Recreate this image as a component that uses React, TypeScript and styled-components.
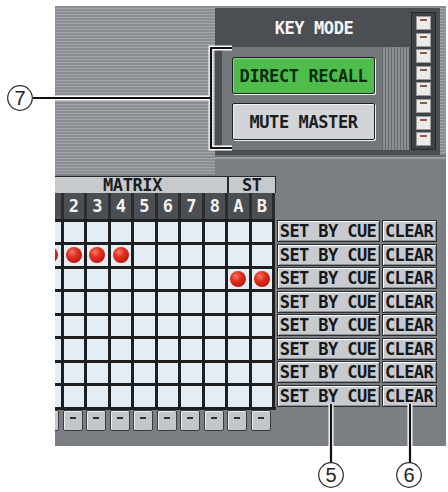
import styled, { createGlobalStyle, css } from "styled-components"

const GlobalStyle = createGlobalStyle`
  html, body {
    margin: 0;
    padding: 0;
    background: #ffffff;
  }
`

const pixelFont = css`
  font-family: "DejaVu Sans Mono", "Liberation Mono", monospace;
  font-weight: bold;
  font-size: 17px;
  letter-spacing: -0.4px;
  white-space: nowrap;
`

const Stage = styled.div`
  position: relative;
  width: 448px;
  height: 492px;
  overflow: hidden;
  padding: 6px 0 0 55px;
  box-sizing: border-box;
`

const Panel = styled.div`
  width: 391px;
  height: 440px;
  background: #7b7f84;
  display: flex;
  flex-direction: column;
`

const TopArea = styled.div`
  height: 168px;
  display: flex;
  background: repeating-linear-gradient(to bottom, #8a8e93 0 1.5px, #a1a5a9 1.5px 3px);
`

const StripeSpace = styled.div`
  width: 160px;
`

const KeyColumn = styled.div`
  display: flex;
  flex-direction: column;
  padding-top: 2px;
  flex: 1;
`

const KeyBox = styled.div`
  width: 225px;
  height: 147px;
  display: flex;
  background: #4b4f53;
`

const KeyFiller = styled.div`
  flex: 1;
  background: #7b7f84;
  border-top: 2px solid #6c7075;
  box-shadow: inset 0 2px 0 #9ca0a4;
`

const KeyMain = styled.div`
  width: 194px;
  display: flex;
  flex-direction: column;
`

const KeyTitle = styled.div`
  ${pixelFont};
  height: 39px;
  display: flex;
  align-items: center;
  justify-content: center;
  color: #f4f4f4;
  padding-left: 4px;
`

const KeyBody = styled.div`
  flex: 1;
  margin: 0 0 5px 7px;
  background: #74787c;
  display: flex;
  padding: 10px 0 10px 10px;
  gap: 7px;
`

const ModeButtons = styled.div`
  width: 143px;
  display: flex;
  flex-direction: column;
  gap: 9px;
`

const ModeButton = styled.div<{ $on?: boolean }>`
  ${pixelFont};
  height: 37px;
  box-sizing: border-box;
  display: flex;
  align-items: center;
  justify-content: center;
  border: 1px solid #1f2224;
  border-radius: 2px;
  background: ${({ $on }) => ($on ? "#4fbd4b" : "#d2d4d8")};
  color: ${({ $on }) => ($on ? "#0e2a10" : "#1b1d20")};
  box-shadow: 1px 1px 0 #eef0f2, inset 1px 1px 0 ${({ $on }) => ($on ? "#7ad676" : "#f2f3f5")};
`

const VStripes = styled.div`
  width: 27px;
  margin: -10px 0;
  background: repeating-linear-gradient(to right, #65696d 0 1px, #8a8e92 1px 3px);
`

const KeyStrip = styled.div`
  width: 31px;
  padding: 4px 4px 5px 2px;
  box-sizing: border-box;
  display: flex;
`

const StripFrame = styled.div`
  flex: 1;
  background: #3e4246;
  border: 1px solid #25282b;
  display: flex;
  flex-direction: column;
  align-items: center;
  padding-top: 3px;
  gap: 2.6px;
`

const StripKey = styled.div`
  width: 15px;
  height: 14px;
  box-sizing: border-box;
  background: #ecebea;
  border: 1px solid #9a9a9a;
  display: flex;
  justify-content: center;
  padding-top: 2px;

  &::before {
    content: "";
    width: 7px;
    height: 2px;
    background: #8a5a44;
  }
`

const MatrixArea = styled.div`
  flex: 1;
  padding-top: 2px;
  overflow: hidden;
`

const GridShift = styled.div`
  margin-left: -18px;
`

const BandRow = styled.div`
  display: flex;
  height: 17px;
`

const Band = styled.div<{ $w: number }>`
  ${pixelFont};
  width: ${({ $w }) => $w}px;
  box-sizing: border-box;
  background: #c6cacd;
  border: 1.5px solid #26292c;
  border-bottom: none;
  color: #1c1e21;
  display: flex;
  align-items: center;
  justify-content: center;
  line-height: 1;
`

const NumberRow = styled.div`
  display: flex;
  height: 25.5px;
`

const NumberCell = styled.div<{ $last?: boolean }>`
  ${pixelFont};
  width: ${({ $last }) => ($last ? 26.5 : 23.5)}px;
  box-sizing: border-box;
  background: #4b4f53;
  border-left: 3px solid #2a2d30;
  border-right: ${({ $last }) => ($last ? "3px solid #2a2d30" : "none")};
  color: #f2f2f2;
  display: flex;
  align-items: center;
  justify-content: center;
`

const DataRow = styled.div`
  display: flex;
  height: 23.5px;
`

const Cell = styled.div<{ $last?: boolean }>`
  flex-shrink: 0;
  width: ${({ $last }) => ($last ? 26.5 : 23.5)}px;
  box-sizing: border-box;
  background: #e4ecf4;
  border-top: 3px solid #1e1f20;
  border-left: 3px solid #1e1f20;
  border-right: ${({ $last }) => ($last ? "3px solid #1e1f20" : "none")};
  display: flex;
  align-items: center;
  justify-content: center;
`

const Dot = styled.div`
  width: 16px;
  height: 16px;
  border-radius: 50%;
  background: radial-gradient(circle at 38% 32%, #f47a64 0, #e0301f 35%, #c41c12 70%, #8e140c 100%);
`

const RowButtons = styled.div`
  display: flex;
  flex-shrink: 0;
  gap: 2px;
  margin-left: 1.5px;
  padding-top: 1.5px;
`

const CueButton = styled.div<{ $w: number }>`
  ${pixelFont};
  flex-shrink: 0;
  width: ${({ $w }) => $w}px;
  height: 22px;
  box-sizing: border-box;
  background: #c7cacf;
  border: 1px solid #2b2d30;
  box-shadow: inset 1px 1px 0 #ffffff, inset -1px -1px 0 #8c9095;
  color: #16181a;
  display: flex;
  align-items: center;
  justify-content: center;
  letter-spacing: -0.6px;
`

const FooterRow = styled.div`
  display: flex;
  width: 238.5px;
  border-top: 3px solid #1e1f20;
  height: 21.5px;
`

const FooterCell = styled.div`
  width: 23.5px;
  box-sizing: border-box;
  padding: 0 0 0 2px;
  display: flex;
`

const MiniKey = styled.div`
  width: 20px;
  height: 21px;
  box-sizing: border-box;
  background: #c3c6cb;
  border: 1px solid #3a3d40;
  border-radius: 2px;
  box-shadow: inset 1px 1px 0 #eceef0;
  display: flex;
  justify-content: center;
  padding-top: 6px;

  &::before {
    content: "";
    width: 6px;
    height: 2px;
    background: #2c2f33;
  }
`

const Overlay = styled.svg`
  position: absolute;
  left: 0;
  top: 0;
  pointer-events: none;
`

// column 1 is clipped by the panel edge, so its label is not drawn
const columns = ["", "2", "3", "4", "5", "6", "7", "8", "A", "B"]

const dots: number[][] = [[], [0, 1, 2, 3], [8, 9], [], [], [], [], []]

function Callout({ x, y, label }: { x: number; y: number; label: string }) {
  return (
    <g>
      <circle cx={x} cy={y} r={12.3} fill="#ffffff" stroke="#2a2a2a" strokeWidth={1.2} />
      <text
        x={x}
        y={y + 7}
        textAnchor="middle"
        fontFamily="Liberation Sans, Arial, sans-serif"
        fontSize={20}
        fill="#222"
      >
        {label}
      </text>
    </g>
  )
}

const leaderPaths = ["M232 48 H211 V148 H232", "M33 98 H211", "M331 404 V463", "M410 404 V463"]

export default function App() {
  return (
    <>
      <GlobalStyle />
      <Stage>
        <Panel>
          <TopArea>
            <StripeSpace />
            <KeyColumn>
              <KeyBox>
                <KeyMain>
                  <KeyTitle>KEY MODE</KeyTitle>
                  <KeyBody>
                    <ModeButtons>
                      <ModeButton $on>DIRECT RECALL</ModeButton>
                      <ModeButton>MUTE MASTER</ModeButton>
                    </ModeButtons>
                    <VStripes />
                  </KeyBody>
                </KeyMain>
                <KeyStrip>
                  <StripFrame>
                    {Array.from({ length: 8 }, (_, i) => (
                      <StripKey key={i} />
                    ))}
                  </StripFrame>
                </KeyStrip>
              </KeyBox>
              <KeyFiller />
            </KeyColumn>
          </TopArea>

          <MatrixArea>
            <GridShift>
              <BandRow>
                <Band $w={191}>MATRIX</Band>
                <Band $w={47.5}>ST</Band>
              </BandRow>
              <NumberRow>
                {columns.map((c, i) => (
                  <NumberCell key={i} $last={i === columns.length - 1}>
                    {c}
                  </NumberCell>
                ))}
              </NumberRow>
              {dots.map((row, r) => (
                <DataRow key={r}>
                  {columns.map((_, i) => (
                    <Cell key={i} $last={i === columns.length - 1}>
                      {row.includes(i) && <Dot />}
                    </Cell>
                  ))}
                  <RowButtons>
                    <CueButton $w={103}>SET BY CUE</CueButton>
                    <CueButton $w={55}>CLEAR</CueButton>
                  </RowButtons>
                </DataRow>
              ))}
              <FooterRow>
                {columns.map((_, i) => (
                  <FooterCell key={i}>
                    <MiniKey />
                  </FooterCell>
                ))}
              </FooterRow>
            </GridShift>
          </MatrixArea>
        </Panel>

        <Overlay width={448} height={492} viewBox="0 0 448 492">
          {leaderPaths.map((d) => (
            <path key={d + "w"} d={d} fill="none" stroke="#ffffff" strokeWidth={5} />
          ))}
          {leaderPaths.map((d) => (
            <path key={d} d={d} fill="none" stroke="#111111" strokeWidth={2.2} />
          ))}
          <Callout x={20} y={98} label="7" />
          <Callout x={331} y={475} label="5" />
          <Callout x={409} y={475} label="6" />
        </Overlay>
      </Stage>
    </>
  )
}
